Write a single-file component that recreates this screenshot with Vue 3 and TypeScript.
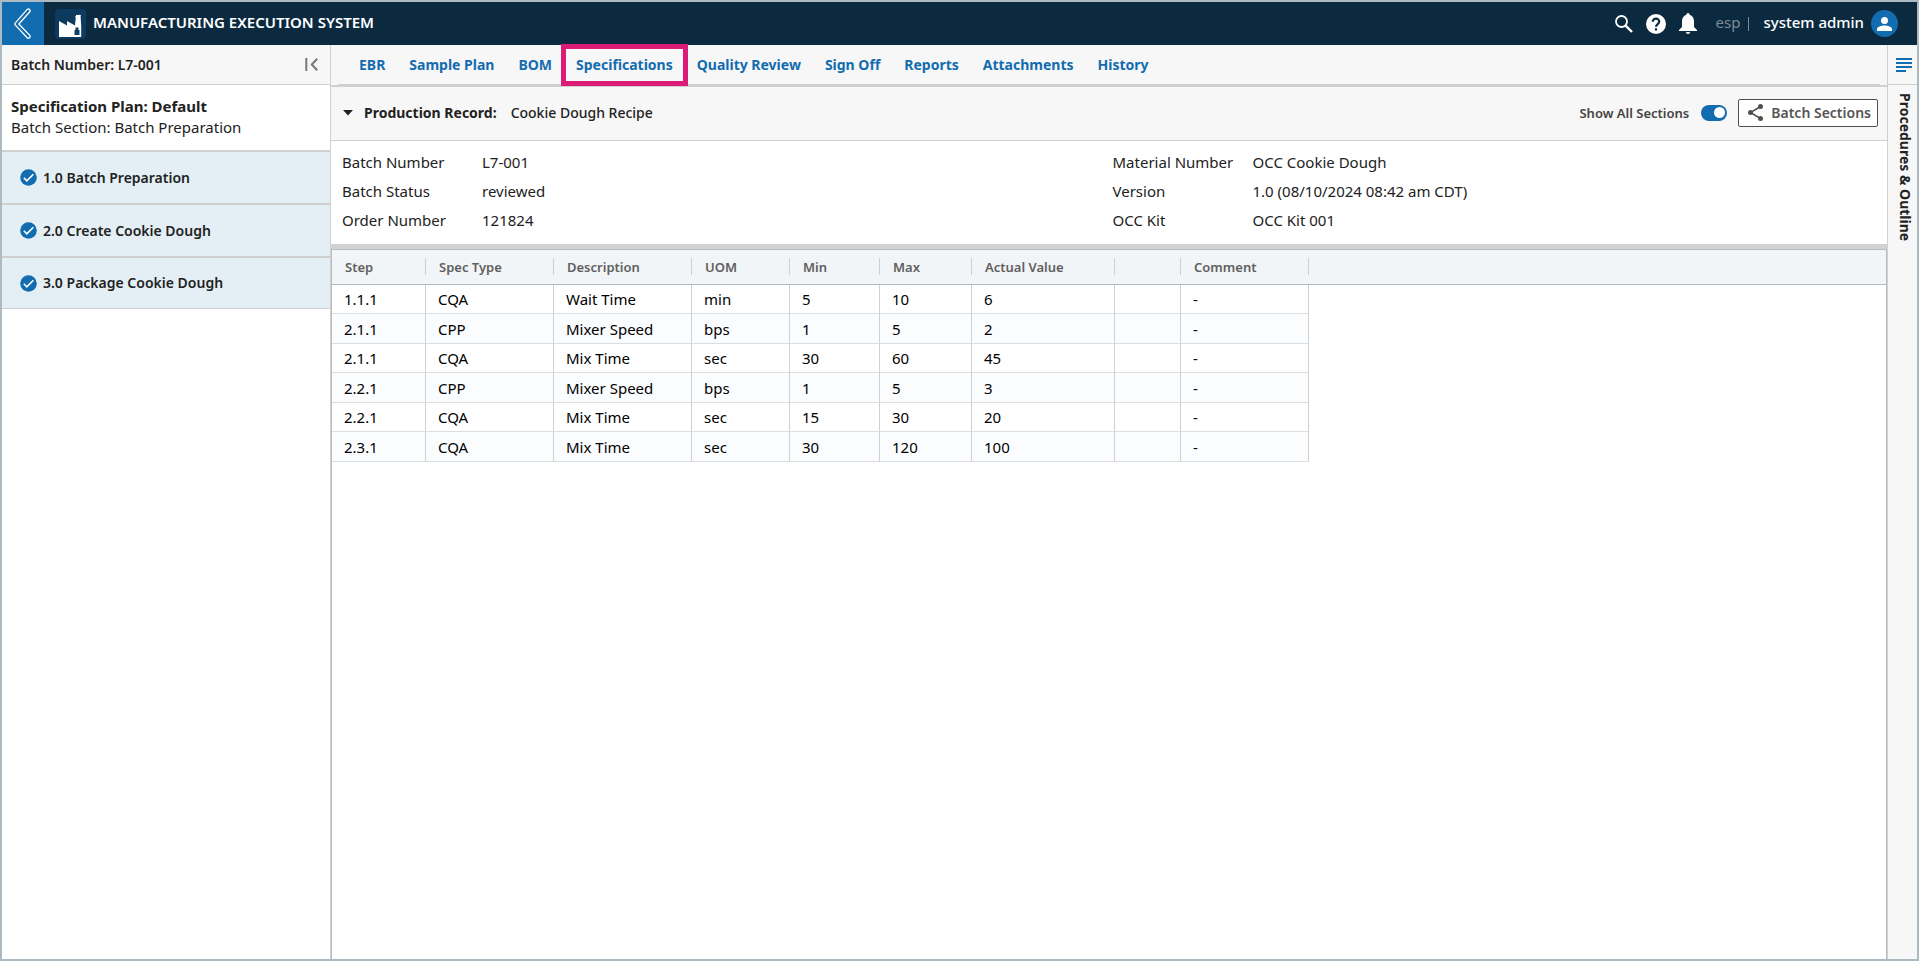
<script setup lang="ts">
import { ref } from 'vue'

interface SpecRow {
  step: string
  type: string
  description: string
  uom: string
  min: string
  max: string
  actual: string
  comment: string
}

const tabs: string[] = [
  'EBR', 'Sample Plan', 'BOM', 'Specifications', 'Quality Review',
  'Sign Off', 'Reports', 'Attachments', 'History',
]
const activeTab = ref('Specifications')

const sections: string[] = ['1.0 Batch Preparation', '2.0 Create Cookie Dough', '3.0 Package Cookie Dough']

const details: [string, string][][] = [
  [['Batch Number', 'L7-001'], ['Batch Status', 'reviewed'], ['Order Number', '121824']],
  [['Material Number', 'OCC Cookie Dough'], ['Version', '1.0 (08/10/2024 08:42 am CDT)'], ['OCC Kit', 'OCC Kit 001']],
]

const columns: string[] = ['Step', 'Spec Type', 'Description', 'UOM', 'Min', 'Max', 'Actual Value', '', 'Comment']

const rows: SpecRow[] = [
  { step: '1.1.1', type: 'CQA', description: 'Wait Time', uom: 'min', min: '5', max: '10', actual: '6', comment: '-' },
  { step: '2.1.1', type: 'CPP', description: 'Mixer Speed', uom: 'bps', min: '1', max: '5', actual: '2', comment: '-' },
  { step: '2.1.1', type: 'CQA', description: 'Mix Time', uom: 'sec', min: '30', max: '60', actual: '45', comment: '-' },
  { step: '2.2.1', type: 'CPP', description: 'Mixer Speed', uom: 'bps', min: '1', max: '5', actual: '3', comment: '-' },
  { step: '2.2.1', type: 'CQA', description: 'Mix Time', uom: 'sec', min: '15', max: '30', actual: '20', comment: '-' },
  { step: '2.3.1', type: 'CQA', description: 'Mix Time', uom: 'sec', min: '30', max: '120', actual: '100', comment: '-' },
]

const showAll = ref(true)
const open = ref(true)
</script>

<template>
  <div class="app">
    <header class="topbar">
      <button class="back" aria-label="Back">
        <svg width="18" height="32" viewBox="0 0 18 32">
          <path d="M15.800 3.800a1.800 1.800 0 0 0-2.600-2.400L1.600 14.600a2 2 0 0 0 0 2.800l11.600 12.400a1.800 1.800 0 0 0 2.600-2.400L4.800 16z" fill="none" stroke="#fff" stroke-width="1.300" />
        </svg>
      </button>
      <span class="logo">
        <svg width="31" height="30" viewBox="0 0 31 30">
          <path d="M4 28V12l8 4.500v-4.500l8 4.500 1-10.500h4.500l.7 11V28z" fill="#fff" />
          <path d="M20.500 8q3-2.500 5.200-1" stroke="#fff" stroke-width="1.200" fill="none" />
          <path d="M19.500 26v-5h1v-2.500h3V21h1v5z" fill="#0d3f68" />
        </svg>
      </span>
      <h1>MANUFACTURING EXECUTION SYSTEM</h1>
      <div class="tools">
        <button aria-label="Search">
          <svg width="18" height="18" viewBox="0 0 18 18"><circle cx="6.500" cy="6.500" r="5.500" fill="none" stroke="#fff" stroke-width="1.800" /><path d="M10.600 10.600 17 17" stroke="#fff" stroke-width="2.400" /></svg>
        </button>
        <button aria-label="Help">
          <svg width="20" height="20" viewBox="0 0 20 20"><circle cx="10" cy="10" r="10" fill="#fff" /><path d="M6.800 7.800c0-4.300 6.600-4 6.400 0 0 2.300-3.200 2.200-3.200 4.900M10 14.200v2.300" fill="none" stroke="#0b2a3f" stroke-width="2.200" /></svg>
        </button>
        <button aria-label="Notifications">
          <svg width="18" height="21" viewBox="0 0 18 21"><path d="M9 0a1.600 1.600 0 0 1 1.600 1.700C13.600 2.500 15 5.200 15 8v6l3 3v1H0v-1l3-3V8c0-2.800 1.400-5.500 4.400-6.300A1.600 1.600 0 0 1 9 0zM7 19h4a2 2 0 0 1-4 0z" fill="#fff" /></svg>
        </button>
      </div>
      <span class="tenant">esp</span>
      <span class="bar"></span>
      <span class="user">system admin</span>
      <button class="avatar" aria-label="Account">
        <svg width="15" height="14" viewBox="0 0 15 14"><circle cx="7.500" cy="3.500" r="3.500" fill="#fff" /><path d="M0 14v-1.800C0 9.800 4.500 8.600 7.500 8.600s7.500 1.200 7.500 3.600V14z" fill="#fff" /></svg>
      </button>
    </header>

    <div class="body">
      <aside class="sidebar">
        <div class="side-head">
          <span>Batch Number: L7-001</span>
          <button aria-label="Collapse panel">
            <svg width="13" height="13" viewBox="0 0 13 13"><path d="M1.300 0v13M12.200.8 6.800 6.500l5.400 5.700" fill="none" stroke="#777" stroke-width="2" /></svg>
          </button>
        </div>
        <div class="plan">
          <strong>Specification Plan: Default</strong>
          <span>Batch Section: Batch Preparation</span>
        </div>
        <ul class="sections">
          <li v-for="s in sections" :key="s">
            <a href="#">
              <svg width="17" height="17" viewBox="0 0 17 17"><circle cx="8.500" cy="8.500" r="8.300" fill="#126cb0" /><path d="m3.800 8.800 3 3 6.600-6.600" fill="none" stroke="#fff" stroke-width="1.600" /></svg>
              {{ s }}
            </a>
          </li>
        </ul>
      </aside>

      <main class="main">
        <div class="tabs-wrap">
          <nav class="tabs">
            <a v-for="t in tabs" :key="t" href="#" :class="{ active: t === activeTab }" @click.prevent="activeTab = t">{{ t }}</a>
          </nav>
        </div>

        <section class="record">
          <button class="caret" aria-label="Toggle details" @click="open = !open">
            <svg width="10" height="6" viewBox="0 0 10 6"><path d="M0 0h10L5 5.500z" fill="#222" /></svg>
          </button>
          <strong>Production Record:</strong>
          <span class="recipe">Cookie Dough Recipe</span>
          <label class="show-all">
            Show All Sections
            <input v-model="showAll" type="checkbox" />
          </label>
          <button class="batch-btn">
            <svg width="15" height="17" viewBox="0 0 15 17"><path d="M12.500 2.500 2.500 8.500l10 6" fill="none" stroke="#505050" stroke-width="1.500" /><circle cx="12.500" cy="2.500" r="2.500" fill="#505050" /><circle cx="2.500" cy="8.500" r="2.500" fill="#505050" /><circle cx="12.500" cy="14.500" r="2.500" fill="#505050" /></svg>
            Batch Sections
          </button>
        </section>

        <section v-if="open" class="details">
          <dl v-for="(col, i) in details" :key="i">
            <template v-for="[k, v] in col" :key="k">
              <dt>{{ k }}</dt>
              <dd>{{ v }}</dd>
            </template>
          </dl>
        </section>

        <section class="grid">
          <div class="grid-head-fill">
            <table>
              <colgroup>
                <col class="c-step" /><col class="c-type" /><col class="c-desc" /><col class="c-uom" /><col class="c-min" />
                <col class="c-max" /><col class="c-actual" /><col class="c-flag" /><col class="c-comment" />
              </colgroup>
              <thead>
                <tr>
                  <th v-for="(c, i) in columns" :key="i" scope="col"><span>{{ c }}</span></th>
                </tr>
              </thead>
              <tbody>
                <tr v-for="(r, i) in rows" :key="i">
                  <td>{{ r.step }}</td>
                  <td>{{ r.type }}</td>
                  <td>{{ r.description }}</td>
                  <td>{{ r.uom }}</td>
                  <td>{{ r.min }}</td>
                  <td>{{ r.max }}</td>
                  <td>{{ r.actual }}</td>
                  <td></td>
                  <td>{{ r.comment }}</td>
                </tr>
              </tbody>
            </table>
          </div>
        </section>
      </main>

      <aside class="rail">
        <button class="rail-menu" aria-label="Open outline">
          <svg width="16" height="14" viewBox="0 0 16 14"><path d="M0 1h16M0 5h16M0 9h16M0 13h10" stroke="#126cb0" stroke-width="2" /></svg>
        </button>
        <button class="rail-label">Procedures &amp; Outline</button>
      </aside>
    </div>
  </div>
</template>

<style>
body {
  margin: 0;
}
</style>

<style scoped>
* {
  box-sizing: border-box;
}
button {
  font: inherit;
  color: inherit;
  background: none;
  border: 0;
  padding: 0;
  display: flex;
  align-items: center;
  justify-content: center;
  cursor: pointer;
}
a {
  text-decoration: none;
}
svg {
  display: block;
  flex: none;
}
.app {
  min-height: 100vh;
  display: flex;
  flex-direction: column;
  border: 2px solid #adbac2;
  background: #fff;
  color: #222;
  font: 15px/20px 'Noto Sans', 'Open Sans', sans-serif;
}
.topbar {
  height: 43px;
  display: flex;
  align-items: center;
  background: #0b2a3f;
  color: #fff;
  padding-right: 19px;
}
.back {
  width: 42px;
  height: 43px;
  background: #126cb0;
}
.logo {
  margin: 0 7px 0 11px;
  width: 31px;
  height: 30px;
  border-radius: 4px;
  background: #0d3b60;
}
h1 {
  margin: 0;
  font-size: 15px;
  font-weight: 600;
}
h1,
.tenant,
.user {
  padding-bottom: 4px;
}
.tools {
  margin-left: auto;
  display: flex;
  align-items: center;
  gap: 13px;
}
.tenant {
  margin-left: 19px;
  color: #7b8b97;
}
.bar {
  width: 1px;
  height: 14px;
  margin: 0 14px 0 8px;
  background: #7b8b97;
}
.user {
  font-weight: 500;
}
.avatar {
  margin-left: 7px;
  width: 27px;
  height: 27px;
  border-radius: 50%;
  background: #126cb0;
}
.body {
  flex: 1;
  display: flex;
}
.sidebar {
  width: 329px;
  flex: none;
  border-right: 1px solid #d0d0d0;
}
.side-head {
  height: 40px;
  display: flex;
  align-items: center;
  justify-content: space-between;
  padding: 0 12px 0 9px;
  background: #f7f7f7;
  border-bottom: 1px solid #d0d0d0;
  font-size: 14px;
  font-weight: 600;
}
.plan {
  padding: 11px 9px 12px;
  display: flex;
  flex-direction: column;
  line-height: 21px;
  border-bottom: 2px solid #d0d0d0;
}
.sections {
  margin: 0;
  padding: 0;
  list-style: none;
}
.sections li {
  border-bottom: 2px solid #d0d0d0;
}
.sections li:last-child {
  border-bottom-width: 1px;
}
.sections a {
  height: 51px;
  display: flex;
  align-items: center;
  gap: 6px;
  padding-left: 18px;
  background: #e4eff5;
  color: #222;
  font-size: 14px;
  font-weight: 600;
}
.sections li:last-child a {
  height: 50px;
}
.main {
  flex: 1;
  min-width: 0;
  display: flex;
  flex-direction: column;
}
.tabs-wrap {
  padding: 0 7px;
  background: #f7f7f7;
  border-bottom: 2px solid #d0d0d0;
}
.tabs {
  height: 40px;
  display: flex;
  align-items: center;
  gap: 24px;
  padding-left: 21px;
  border-bottom: 1px solid #d0d0d0;
  font-size: 14px;
  font-weight: 700;
}
.tabs a {
  position: relative;
  color: #126cb0;
}
.active::after {
  content: '';
  position: absolute;
  inset: -11px -15px;
  border: 5px solid #dc1a78;
}
.record {
  height: 54px;
  display: flex;
  align-items: center;
  padding: 0 9px 2px 11px;
  background: #f7f7f7;
  border-bottom: 1px solid #d0d0d0;
  font-size: 14px;
}
.caret {
  width: 11px;
  height: 20px;
  margin-right: 11px;
}
.recipe {
  margin-left: 14px;
  font-weight: 500;
}
.show-all {
  margin-left: auto;
  display: flex;
  align-items: center;
  gap: 12px;
  color: #444;
  font-size: 13px;
  font-weight: 600;
}
.show-all input {
  appearance: none;
  margin: 0;
  width: 26px;
  height: 16px;
  border-radius: 8px;
  background: #9aa5ad;
  display: flex;
  align-items: center;
  padding: 0 2px;
}
.show-all input:checked {
  background: #126cb0;
  justify-content: flex-end;
}
.show-all input::before {
  content: '';
  width: 11px;
  height: 11px;
  border-radius: 50%;
  background: #fff;
}
.batch-btn {
  height: 28px;
  margin-left: 11px;
  padding: 0 6px 0 9px;
  gap: 8px;
  border: 1px solid #505050;
  border-radius: 2px;
  background: #fff;
  color: #555;
  font-weight: 600;
}
.details {
  display: grid;
  grid-template-columns: 1fr 1fr;
  padding: 7px 4px 9px 11px;
  border-bottom: 5px solid #d2d2d2;
}
dl {
  margin: 0;
  display: grid;
  grid-template-columns: 140px 1fr;
  line-height: 29px;
}
dt,
dd {
  margin: 0;
}
.grid {
  flex: 1;
  border: 1px solid #b9bdbf;
  border-bottom: 0;
}
.grid-head-fill {
  background: linear-gradient(#f2f5f7 34px, #b4bbbf 34px, #b4bbbf 35px, #fff 35px);
}
table {
  table-layout: fixed;
  width: 977px;
  border-collapse: separate;
  border-spacing: 0;
  color: #000;
}
.c-step { width: 94px; }
.c-type { width: 128px; }
.c-desc { width: 138px; }
.c-uom { width: 98px; }
.c-min { width: 90px; }
.c-max { width: 92px; }
.c-actual { width: 143px; }
.c-flag { width: 66px; }
.c-comment { width: 128px; }
th {
  height: 35px;
  padding: 0 0 2px;
  text-align: left;
  color: #606060;
  font-size: 13px;
  font-weight: 600;
}
th span {
  display: block;
  height: 17px;
  line-height: 18px;
  padding-left: 13px;
  border-right: 1px solid #cfcfcf;
}
td {
  height: 29px;
  padding: 0 0 0 12px;
  line-height: 20px;
  border-right: 1px solid #d0d0d0;
  border-bottom: 1px solid #dcdfe1;
}
tbody tr:nth-child(even) td {
  height: 30px;
  background: #fbfcfe;
}
.rail {
  width: 30px;
  flex: none;
  border-left: 1px solid #d0d0d0;
  background: #f7f7f7;
}
.rail-menu {
  width: 100%;
  height: 40px;
  padding-left: 3px;
  border-bottom: 1px solid #d0d0d0;
}
.rail-label {
  width: 100%;
  margin-top: 8px;
  padding-left: 4px;
  writing-mode: vertical-rl;
  font-size: 14px;
  font-weight: 700;
}
</style>
